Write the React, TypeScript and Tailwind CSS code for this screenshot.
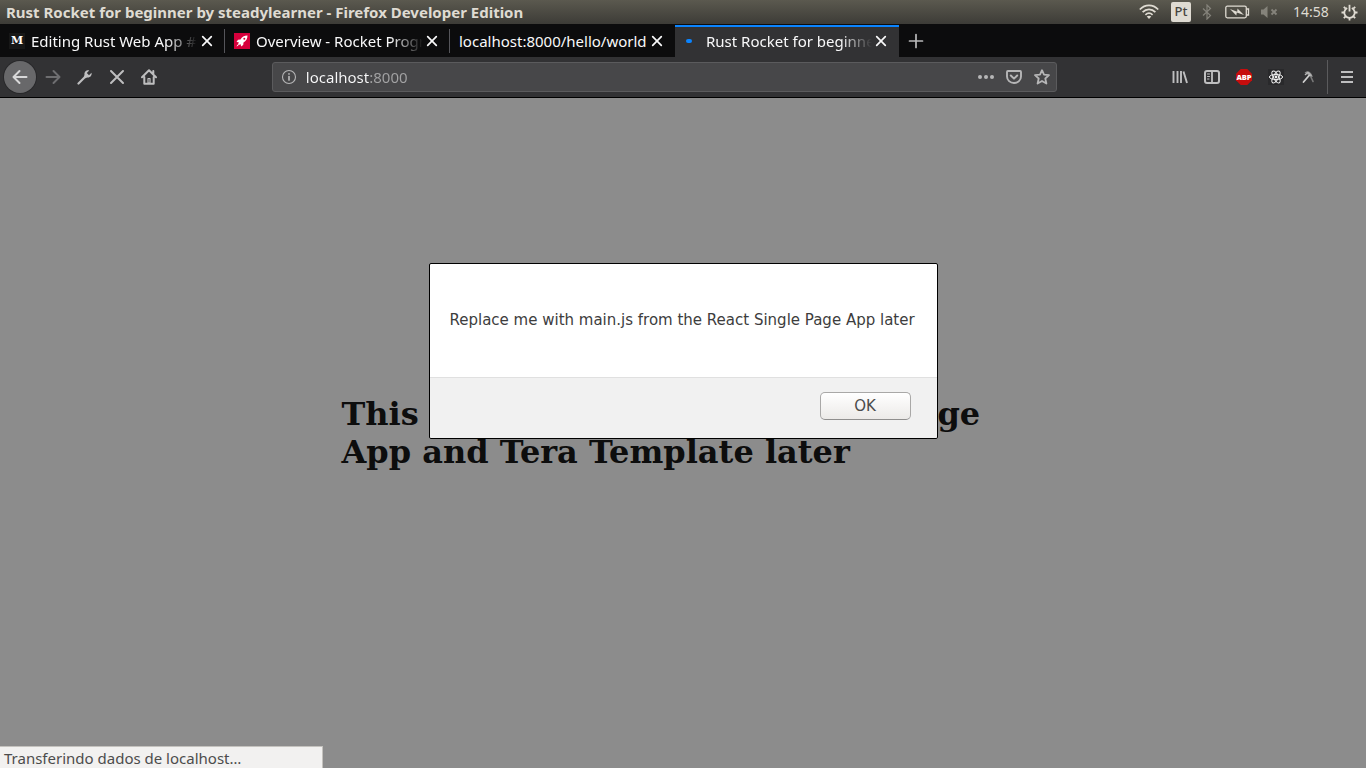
import type { ReactNode } from "react";

function Icon({ children, className = "" }: { children: ReactNode; className?: string }) {
  return (
    <svg viewBox="0 0 16 16" className={`size-4 shrink-0 ${className}`} fill="none" stroke="currentColor" strokeWidth="2" strokeLinecap="round" strokeLinejoin="round" aria-hidden="true">
      {children}
    </svg>
  );
}

function TrayIcons() {
  return (
    <div className="flex shrink-0 items-center text-[#dfdbd2]">
      <svg width="20" height="16" viewBox="0 0 20 16" fill="none" stroke="currentColor" strokeWidth="1.7" aria-hidden="true">
        <path d="M.8 5.5C6-.1 14-.1 19.200 5.500M3.600 8.200c3.700-3.800 9.100-3.800 12.800 0M6.400 10.900c2.200-2.100 5-2.100 7.200 0" />
        <path d="M7.700 12.500 10 15l2.300-2.500c-1.400-1.100-3.200-1.100-4.600 0z" fill="currentColor" stroke="none" />
      </svg>
      <span className="ml-3 flex h-5 w-5 items-center justify-center rounded-xs bg-[#dfdbd2] text-[13px] font-medium text-[#45443f]">Pt</span>
      <svg className="ml-2 text-[#85837b]" width="16" height="16" viewBox="0 0 16 16" fill="none" stroke="currentColor" strokeWidth="1.2" aria-hidden="true">
        <path d="m4 4.500 7.500 7L8 15V1l3.500 3.500-7.500 7" />
      </svg>
      <svg className="ml-[10px]" width="25" height="14" viewBox="0 0 25 14" fill="none" stroke="currentColor" strokeWidth="1.300" aria-hidden="true">
        <rect x=".8" y="1.200" width="20.500" height="11.600" rx="1.500" />
        <path d="M21.500 4h2v6h-2" />
        <path d="m5 4 7.200 2.800.3-3.300 6.500 6.500-7.200-2.500-.5 3z" fill="currentColor" stroke="none" />
      </svg>
      <svg className="ml-[10px] text-[#85837b]" width="18" height="14" viewBox="0 0 18 14" aria-hidden="true">
        <path d="M1 4.500h2.500L7.500 1v12L3.500 9.500H1z" fill="currentColor" />
        <path d="m11.500 4.500 5 5m0-5-5 5" fill="none" stroke="currentColor" strokeWidth="1.800" />
      </svg>
      <time className="ml-[15px] w-9 text-center text-sm">14:58</time>
      <svg className="ml-3" width="17" height="17" viewBox="0 0 17 17" fill="none" stroke="currentColor" strokeWidth="1.800" aria-hidden="true">
        <path d="M6.200 4a5.200 5.200 0 1 0 4.600 0" />
        <path d="M8.500.8v6.700" />
        <path d="M.5 8.500h2.500M14 8.500h2.500M8.500 14v2.500M2.800 2.800l1.900 1.900M14.200 2.800l-1.900 1.900M2.800 14.200l1.900-1.900M14.200 14.200l-1.900-1.900" />
      </svg>
    </div>
  );
}

interface TabProps {
  title: string;
  icon?: ReactNode;
  active?: boolean;
  fade?: boolean;
  divider?: boolean;
}

function Tab({ title, icon, active, fade, divider }: TabProps) {
  return (
    <div role="tab" aria-selected={!!active} className={`relative flex h-8 items-center px-[9px] ${active ? "w-56 bg-[#323234] shadow-[inset_0_2px_0_#0a84ff]" : "w-[225px]"}`}>
      {icon && <span className="mr-[6px] flex size-4 shrink-0 items-center justify-center">{icon}</span>}
      <span className={`min-w-0 flex-1 overflow-hidden whitespace-nowrap text-[15px] leading-6 text-[#f9f9fa] ${fade ? "[mask-image:linear-gradient(to_right,black_calc(100%-32px),transparent)]" : ""}`}>
        {title}
      </span>
      <button type="button" aria-label={`Close ${title}`} className="flex h-4 w-[18px] shrink-0 items-center justify-center text-[#f9f9fa]">
        <Icon><path d="m3.700 3.700 8.600 8.600m0-8.600-8.600 8.600" strokeWidth="1.700" /></Icon>
      </button>
      {divider && <span className="absolute top-1 right-0 h-6 w-px bg-[#55555a]" />}
    </div>
  );
}

function ToolButton({ label, children, dim }: { label: string; children: ReactNode; dim?: boolean }) {
  return (
    <button type="button" aria-label={label} disabled={dim} className={`flex size-8 shrink-0 items-center justify-center ${dim ? "text-[#6e6e70]" : "text-[#bebebf]"}`}>
      {children}
    </button>
  );
}

const backArrow = "M14.500 8H2M7.500 2 1.500 8l6 6";

export default function App() {
  return (
    <div className="flex h-screen flex-col overflow-hidden font-['Noto_Sans',sans-serif]">
      <header className="flex h-6 shrink-0 items-center justify-between bg-linear-to-b from-[#5b594f] to-[#3d3c37] pr-2 pl-[6px]">
        <h1 className="truncate text-[15px] leading-6 font-bold text-[#dfdbd2]">Rust Rocket for beginner by steadylearner - Firefox Developer Edition</h1>
        <TrayIcons />
      </header>

      <div role="tablist" className="flex h-[33px] shrink-0 items-end bg-[#0c0c0d]">
        <Tab
          title="Editing Rust Web App #1"
          fade
          divider
          icon={
            <span className="flex size-4 items-center justify-center bg-[#171717] font-['DejaVu_Serif',serif] text-[11px] font-bold text-white">M</span>
          }
        />
        <Tab
          title="Overview - Rocket Progra"
          fade
          divider
          icon={
            <svg viewBox="0 0 16 16" className="size-4" aria-hidden="true">
              <path d="M0 0h16v16H0z" fill="#d6003c" />
              <path d="M13.500 2.500c-3.500 0-5.500 1.500-7 4L4 6.800 2.500 9l2.300.2L4 11.500l.5.500 2.300-.8.200 2.300 2.200-1.500.3-2.500c2.500-1.500 4-3.500 4-7zM3.500 11.500l-1 2 2-1z" fill="#fff" />
              <circle cx="10.300" cy="5.700" r="1" fill="#d6003c" />
            </svg>
          }
        />
        <Tab title="localhost:8000/hello/world" />
        <Tab title="Rust Rocket for beginner" active fade icon={<span className="mr-[6px] h-1 w-[6px] shrink-0 rounded-full bg-[#0a84ff]" />} />
        <button type="button" aria-label="New tab" className="flex h-8 w-[34px] items-center justify-center text-[#b9b9ba]">
          <Icon><path d="M8 1.500v13M1.500 8h13" strokeWidth="1.700" /></Icon>
        </button>
      </div>

      <nav className="flex h-[41px] shrink-0 items-center border-b border-black bg-[#323234] pr-[3px] pl-1">
        <button type="button" aria-label="Back" className="mr-px flex size-8 shrink-0 items-center justify-center rounded-full bg-[#68686a] text-[#d8d8d9] ring-1 ring-[#28282a]">
          <Icon><path d={backArrow} /></Icon>
        </button>
        <ToolButton label="Forward" dim>
          <Icon className="-scale-x-100"><path d={backArrow} /></Icon>
        </ToolButton>
        <ToolButton label="Developer tools">
          <Icon><path d="M1.500 14.500 8 8" strokeWidth="2.200" /><path d="M14.500 3.800 12 6.200 9.800 4l2.400-2.500C9.500.8 7 3 7.500 5.800L6.800 8l1.400 1.300 2-.8c2.800.5 5-2 4.300-4.700z" fill="currentColor" stroke="none" /></Icon>
        </ToolButton>
        <ToolButton label="Stop">
          <Icon><path d="m2 2 12 12M14 2 2 14" /></Icon>
        </ToolButton>
        <ToolButton label="Home">
          <Icon><path d="M1 8.200 8 1.300l7 6.900M3.300 8v6.700h9.400V8M12.300 2v3" /><path d="M7 9.500h2v4.500H7z" strokeWidth="1.200" /></Icon>
        </ToolButton>

        <div className="flex min-w-0 flex-[28] items-center">
          <div className="flex-[3]" />
          <div className="flex h-[30px] min-w-0 flex-[22] items-center rounded-[3px] border border-[#5b5b5d] bg-[#474749] text-[#b6b6b7]">
            <button type="button" aria-label="Site information" className="ml-2 flex size-4 items-center justify-center">
              <Icon><circle cx="8" cy="8" r="6.500" strokeWidth="1.100" /><path d="M8 7.500V11" strokeWidth="1.700" /><path d="M8 4.800v.1" strokeWidth="1.700" /></Icon>
            </button>
            <input
              aria-label="Address"
              defaultValue="localhost:8000"
              className="ml-[9px] block h-7 min-w-0 flex-1 bg-linear-to-r from-[#f9f9fa] from-[64px] to-[#a3a3a4] to-[64px] bg-clip-text text-[15px] leading-7 text-transparent outline-none"
            />
            <button type="button" aria-label="Page actions" className="flex size-7 items-center justify-center">
              <Icon><circle cx="2" cy="8" r="2" fill="currentColor" stroke="none" /><circle cx="8" cy="8" r="2" fill="currentColor" stroke="none" /><circle cx="14" cy="8" r="2" fill="currentColor" stroke="none" /></Icon>
            </button>
            <button type="button" aria-label="Save to Pocket" className="flex size-7 items-center justify-center">
              <Icon><path d="M1.900 2h12.200q.9 0 .9.900V7.500a7 6.500 0 0 1-14 0V2.900q0-.9.900-.9z" strokeWidth="1.900" /><path d="M4.800 6.500 8 9.600l3.200-3.100" /></Icon>
            </button>
            <button type="button" aria-label="Bookmark this page" className="flex size-7 items-center justify-center">
              <Icon><path d="m8 1.200 2 4.500 5 .5-3.700 3.300 1.100 5L8 12l-4.400 2.500 1.100-5L1 6.200l5-.5z" strokeWidth="1.800" /></Icon>
            </button>
          </div>
          <div className="flex-[3]" />
        </div>

        <ToolButton label="Library">
          <Icon><path d="M1.500 2v12M5.500 2v12M9 2v12M11.500 2.500l3.500 11.500" strokeWidth="1.900" strokeLinecap="butt" /></Icon>
        </ToolButton>
        <ToolButton label="Sidebars">
          <Icon><rect x="1" y="2" width="14" height="12" rx="2" /><path d="M8 2v12" strokeWidth="1.800" /><path d="M3.500 5h2M3.500 7.500h2M3.500 10h1.500" strokeWidth="1" /></Icon>
        </ToolButton>
        <ToolButton label="Adblock Plus">
          <svg viewBox="0 0 16 16" className="size-4" aria-hidden="true">
            <path d="M4.700 0h6.600L16 4.700v6.600L11.300 16H4.700L0 11.300V4.700z" fill="#c70d0d" />
            <text x="8" y="10.800" textAnchor="middle" fontFamily="Open Sans, sans-serif" fontSize="7.500" fontWeight="800" fill="#fff">ABP</text>
          </svg>
        </ToolButton>
        <ToolButton label="React Developer Tools">
          <svg viewBox="0 0 16 16" className="size-4 bg-[#29292b]" fill="none" stroke="#f0f0f0" strokeWidth="1" aria-hidden="true">
            <ellipse cx="8" cy="8" rx="6.600" ry="2.600" />
            <ellipse cx="8" cy="8" rx="6.600" ry="2.600" transform="rotate(60 8 8)" />
            <ellipse cx="8" cy="8" rx="6.600" ry="2.600" transform="rotate(120 8 8)" />
            <circle cx="8" cy="8" r="1.400" fill="#f0f0f0" stroke="none" />
          </svg>
        </ToolButton>
        <ToolButton label="Build tools">
          <Icon>
            <path d="M4.500 3.500 7 2.300c2.200 0 4.300 1.200 5.800 5.400L11 8.500 9 6.500z" fill="#8a8a8a" stroke="none" />
            <path d="m10.500 7 2.500 5.500" stroke="#7a7a7a" strokeWidth="1.600" />
            <path d="M3.500 13 9.500 6" stroke="#cfcfcf" strokeWidth="1.800" />
            <path d="M5.500 5.500 8 3.500l3 3" stroke="#b5b5b5" strokeWidth="1.600" />
          </Icon>
        </ToolButton>
        <span className="mr-[3px] ml-[3px] h-[34px] w-px bg-[#5b5b5d]" />
        <ToolButton label="Open menu">
          <Icon><path d="M2 3h12M2 8h12M2 13h12" strokeLinecap="butt" /></Icon>
        </ToolButton>
      </nav>

      <main className="relative flex min-h-0 flex-1 items-center justify-center bg-[#8c8c8c]">
        <h2 className="w-1/2 font-['DejaVu_Serif',serif] text-[32px] leading-[38px] font-bold text-[#0d0d0d]">
          This will be from React Single Page App and Tera Template later
        </h2>

        <div className="absolute inset-0 flex items-start justify-center pt-[165px]">
          <div role="alertdialog" aria-describedby="message" className="min-w-[509px] rounded-xs border border-black bg-white font-['DejaVu_Sans',sans-serif] text-[15px] text-[#3d3d3d]">
            <p id="message" className="px-5 pt-11 pb-[45px] leading-6">Replace me with main.js from the React Single Page App later</p>
            <div className="flex justify-end rounded-b-xs border-t border-[#e0e0e0] bg-[#f1f1f1] pt-[14px] pr-[26px] pb-[18px]">
              <button type="button" className="h-7 w-[91px] rounded-[5px] border border-[#a9a8a7] border-b-[#8f8e8d] bg-linear-to-b from-white to-[#eceae8] text-[#4c4c4c]">OK</button>
            </div>
          </div>
        </div>

        <div role="status" className="absolute bottom-0 left-0 h-[22px] w-[323px] border-t border-r border-[#c4c2be] bg-[#f2f1f0] pl-1 text-[15px] leading-[22px] text-[#4c4c4c]">
          Transferindo dados de localhost…
        </div>
      </main>
    </div>
  );
}
